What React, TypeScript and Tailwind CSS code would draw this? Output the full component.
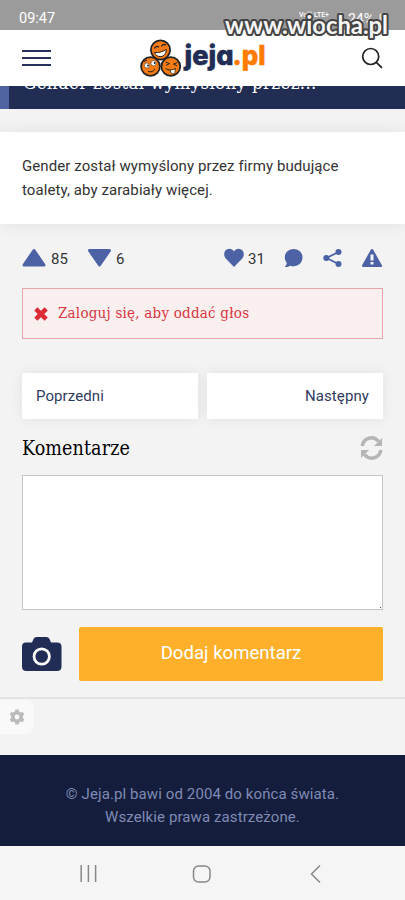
const slab = "font-['DejaVu_Serif_Condensed','DejaVu_Serif',serif] [font-stretch:condensed]";

const StatusBar = () => (
  <div className="relative h-[30px] bg-[#9b9b9b] text-white">
    <span className="absolute left-[19px] top-[9px] text-[14.5px] leading-5">09:47</span>
    <span className="absolute left-[299px] top-[9px] text-[7px] leading-3 font-medium">Vo)) LTE+</span>
    <span className="absolute left-[348px] top-[9px] text-[14px] leading-5">24%</span>
    <svg className="absolute left-0 top-0 z-20" width="405" height="44" viewBox="0 0 405 44">
      <path d="M341 12v10M380 14h3v9h-3z" stroke="#ddd" fill="#ddd" />
      <text
        x="225"
        y="33.500"
        textLength="163"
        lengthAdjust="spacing"
        fontFamily="Lato, sans-serif"
        fontSize="24"
        fontWeight="700"
        fill="#f5f5f5"
        stroke="#444"
        strokeWidth="4"
        strokeLinejoin="round"
        paintOrder="stroke"
      >
        www.wiocha.pl
      </text>
    </svg>
  </div>
);

const Logo = () => (
  <svg width="130" height="44" viewBox="138 36 130 44">
    <g fill="#f47b14" stroke="#222" strokeWidth="1.800">
      <circle cx="160.5" cy="50" r="9.6" />
      <circle cx="150.5" cy="66.5" r="9.4" />
      <circle cx="170.8" cy="66.5" r="9.4" />
    </g>
    {/* laughing face */}
    <path d="M154.5 52.5c4 .5 8-.7 11.8-3-.2 4-2.3 6.800-5.400 7.100-3 .3-5.400-1.300-6.400-4.100z" fill="#fff" stroke="#222" />
    <path d="M154.300 48.500c1-2.200 3.200-2.600 4.600-1.200M161.500 46.500c.8-2.200 3-2.600 4.500-1.200" fill="none" stroke="#222" strokeWidth="1.200" />
    {/* side-eyed face */}
    <circle cx="147" cy="65.500" r="2.600" fill="#fff" stroke="#222" strokeWidth=".5" />
    <circle cx="153.600" cy="63.200" r="2.600" fill="#fff" stroke="#222" strokeWidth=".5" />
    <circle cx="148" cy="65.500" r="1" fill="#222" />
    <circle cx="154.700" cy="63" r="1" fill="#222" />
    <path d="M148 71.500c3 1 5.500 0 7-2.500M144 61.500l3-1.500" fill="none" stroke="#222" />
    {/* winking face */}
    <path d="M165.500 62l4 1.500-3.500 2M177.500 62.500l-4 1.500 3.500 1.800M165.500 68.500c3 2 6.500 2 10.500 0" fill="none" stroke="#222" />
    <path d="M170.500 70l4.500-1v3.500c-1 1.800-4 1.500-4.500-.5z" fill="#fff" stroke="#222" strokeWidth=".7" />
    <g fontFamily="Inter, sans-serif" fontSize="27.500" fontWeight="800" strokeWidth=".6" className="[font-feature-settings:'cv11','ss03']">
      <text x="184.500" y="65" textLength="49" lengthAdjust="spacingAndGlyphs" fill="#212d55" stroke="#212d55">
        jeja
      </text>
      <text x="232.500" y="65" textLength="33" lengthAdjust="spacingAndGlyphs" fill="#ff7c00" stroke="#ff7c00">
        .pl
      </text>
    </g>
  </svg>
);

const Header = () => (
  <header className="relative h-14 bg-white">
    <div className="absolute left-[22px] top-5 flex flex-col gap-[5px]">
      <span className="h-0.5 w-[29px] bg-[#27315a]" />
      <span className="h-0.5 w-[29px] bg-[#27315a]" />
      <span className="h-0.5 w-[29px] bg-[#27315a]" />
    </div>
    <div className="absolute left-[138px] top-1.5">
      <Logo />
    </div>
    <svg className="absolute left-[361px] top-[17px]" width="23" height="23" fill="none" stroke="#222" strokeWidth="1.700">
      <circle cx="9.700" cy="9.500" r="8" />
      <path d="M15.300 15.300l5.700 5.500" />
    </svg>
  </header>
);

const Votes = () => (
  <div className="flex h-[26px] items-center text-[15px] text-[#333]">
    <svg width="24" height="20" fill="#4c62a4">
      <path d="M12 2.500L22 17H2z" stroke="#4c62a4" strokeWidth="3" strokeLinejoin="round" />
    </svg>
    <span className="ml-[5px] w-[32px] pt-0.5">85</span>
    <svg className="ml-[4px]" width="25" height="20" fill="#4c62a4">
      <path d="M2.500 2.500h20L12.500 17z" stroke="#4c62a4" strokeWidth="3" strokeLinejoin="round" />
    </svg>
    <span className="ml-[4px] pt-0.5">6</span>
    <svg className="ml-auto" width="20" height="20" fill="#4c62a4">
      <path d="M10 19L2 10.800C-.8 7.700-.2 3.300 2.700 1.600 5.500 0 8.400 1 10 3.400 11.600 1 14.500 0 17.300 1.600c2.900 1.700 3.500 6.100.7 9.200z" />
    </svg>
    <span className="ml-[4px] w-[17px] pt-0.5">31</span>
    <svg className="ml-[19px]" width="19" height="20" fill="#4c62a4">
      <path d="M9.700 1C4.700 1 .8 4.600.8 9.300c0 2.300.7 4 1.900 5.500 0 1.700-.7 3-2 4.200 2.500.1 4.100-.3 5.500-1.300 6.500 2 12.300-2 12.300-8.400C18.500 4.600 14.700 1 9.700 1z" />
    </svg>
    <svg className="ml-5" width="19" height="20" fill="#4c62a4">
      <path d="M15.500 4L3.500 10l12 6" fill="none" stroke="#4c62a4" strokeWidth="1.800" />
      <circle cx="15.500" cy="4" r="3" />
      <circle cx="3.300" cy="10" r="3" />
      <circle cx="15.500" cy="16" r="3" />
    </svg>
    <svg className="ml-[19px]" width="22" height="20">
      <path d="M11 2.200l8.800 15.600H2.200z" fill="#4c62a4" stroke="#4c62a4" strokeWidth="2.500" strokeLinejoin="round" />
      <path d="M9.500 6.500h3v6h-3zM9.500 14h3v2.500h-3z" fill="#f3f3f3" />
    </svg>
  </div>
);

const Comments = () => (
  <section>
    <div className="mt-[15px] flex h-7 items-center justify-between">
      <h2 className={`${slab} pt-px text-[19.500px] tracking-[0.1px] text-black`}>Komentarze</h2>
      <svg width="23" height="26" viewBox="0 0 23 26" fill="#b5b5b5">
        <path d="M2.200 11C3.500 2.500 13.500.2 18.500 6.500M20.800 15C19.500 23.500 9.500 25.800 4.500 19.500" fill="none" stroke="#b5b5b5" strokeWidth="3.500" />
        <path d="M22 3v8h-8zM1 23v-8h8z" />
      </svg>
    </div>
    <div className="relative mt-[13px]">
      <textarea className="block h-[135px] w-full resize-none border border-[#c6c6c6] bg-white" />
      <span className="absolute bottom-[2px] right-[2px] size-px bg-[#444]" />
    </div>
    <div className="mt-[17px] flex h-[54px] items-center justify-between">
      <svg width="40" height="34" viewBox="0 0 40 34">
        <path d="M4 5.500h6l1.500-3.500Q12.500 0 14.500 0h10q2 0 3 2L29 5.500h6q4.500 0 4.500 4v20q0 4.500-4.500 4.500H4.500Q0 34 0 29.500v-20q0-4 4-4z" fill="#212d55" />
        <circle cx="19.700" cy="19.500" r="7.700" fill="none" stroke="#fff" strokeWidth="2.800" />
      </svg>
      <button className="h-[54px] w-[304px] rounded-[2px] bg-[#feb02b] text-[18.600px] text-white">Dodaj komentarz</button>
    </div>
  </section>
);

const Footer = () => (
  <footer className="h-[91px] bg-[#141d3b] pt-[28px] text-center text-[15px] leading-[23px] tracking-[0.1px] text-[#7f8bb5]">
    <p>© Jeja.pl bawi od 2004 do końca świata.</p>
    <p>Wszelkie prawa zastrzeżone.</p>
  </footer>
);

const PhoneNav = () => (
  <svg className="block bg-[#f5f5f5]" width="405" height="54" fill="none" stroke="#888" strokeWidth="1.500">
    <path d="M81.200 19v17M88.400 19v17M95.600 19v17M320 19.500l-8.500 8.500 8.500 8.500" />
    <rect x="193.500" y="20" width="16.500" height="16" rx="5" />
  </svg>
);

export default function App() {
  return (
    <div className="h-[900px] w-[405px] overflow-hidden bg-[#f3f3f3] font-[Roboto,sans-serif]">
      <StatusBar />
      <Header />

      {/* title is partly scrolled under the header */}
      <div className="h-[23px] overflow-hidden border-l-[9px] border-[#4f63a3] bg-[#212d52] pl-[14px] text-white">
        <p className={`${slab} -mt-[15px] text-[18.500px] leading-6 tracking-[0.36px] whitespace-nowrap`}>Gender został wymyślony przez...</p>
      </div>

      <div className="mt-[23px] h-[92px] bg-white px-[22px] pt-[23px] text-[15px] leading-[23.500px] tracking-[0.09px] text-[#333] shadow-[0_0_16px_rgba(0,0,0,0.08)]">
        <p>Gender został wymyślony przez firmy budujące</p>
        <p>toalety, aby zarabiały więcej.</p>
      </div>

      <main className="h-[475px] border-b-2 border-[#e4e4e4] px-[22px] pt-[21px]">
        <Votes />
        <div className="mt-[17px] flex h-[51px] items-center border border-[#e5a5aa] bg-[#faefef] pl-[11px] text-[#d9363e]">
          <svg width="14" height="14" stroke="#dc2b34" strokeWidth="4.500">
            <path d="M1.800 1.800l10.400 10.400M12.200 1.800L1.800 12.200" />
          </svg>
          <span className={`${slab} ml-[10px] text-[15px] tracking-[0.22px]`}>Zaloguj się, aby oddać głos</span>
        </div>
        <div className="mt-[34px] grid h-[46px] grid-cols-2 gap-[9px] text-[15px] tracking-[0.09px] text-[#303a5e]">
          <button className="bg-white px-3.5 text-left shadow-[0_0_12px_rgba(0,0,0,0.08)]">Poprzedni</button>
          <button className="bg-white px-3.5 text-right shadow-[0_0_12px_rgba(0,0,0,0.08)]">Następny</button>
        </div>
        <Comments />
      </main>

      <div className="h-[56px] pt-px">
        <div className="flex h-[34px] w-[34px] items-center justify-center rounded-r-lg bg-[#f9f9f9]">
          <svg width="16" height="16" viewBox="0 0 16 16">
            <circle cx="8" cy="8" r="4.200" fill="none" stroke="#bbb" strokeWidth="3.600" />
            <path d="M8 .5v3M8 12.500v3M1.500 4.200l2.600 1.500M11.900 10.300l2.600 1.500M1.500 11.800l2.600-1.500M11.900 5.700l2.600-1.500" stroke="#bbb" strokeWidth="3.500" />
          </svg>
        </div>
      </div>
      <Footer />
      <PhoneNav />
    </div>
  );
}
